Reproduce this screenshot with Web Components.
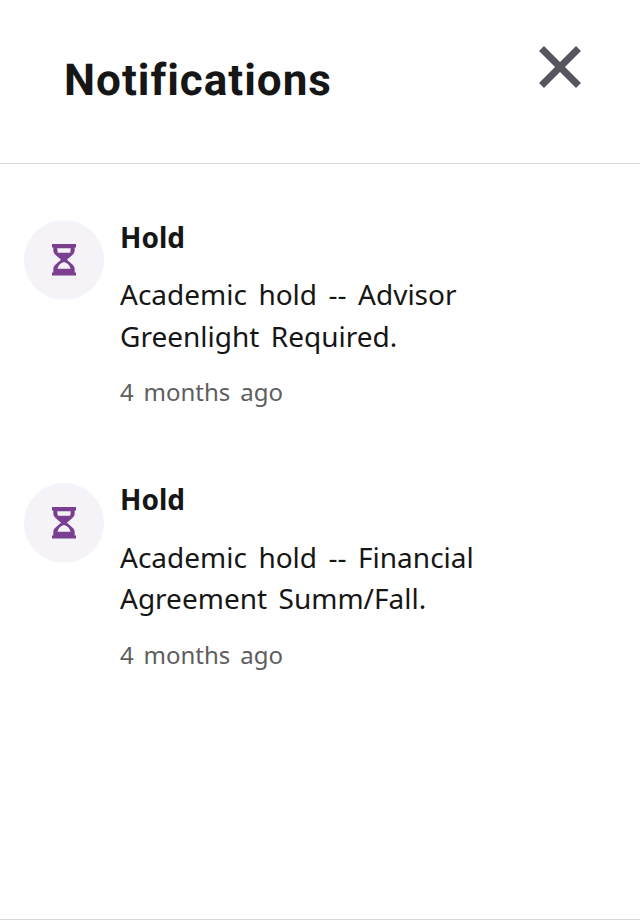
<!DOCTYPE html>
<html><head><meta charset="utf-8"><style>
html,body{margin:0;padding:0;background:#fff}
body{height:920px;overflow:hidden}
notif-panel{height:920px}
</style></head><body>
<notif-panel>
<notif-item title="Hold" time="4 months ago">Academic hold -- Advisor<br>Greenlight Required.</notif-item>
<notif-item title="Hold" time="4 months ago">Academic hold -- Financial<br>Agreement Summ/Fall.</notif-item>
</notif-panel>
<script>
class NotifPanel extends HTMLElement{constructor(){super();this.attachShadow({mode:'open'}).innerHTML=`<style>
:host{display:flex;flex-direction:column;box-sizing:border-box;border-bottom:1px solid #d9d9d9;background:#fff}
header{display:flex;justify-content:space-between;align-items:flex-start;box-sizing:border-box;border-bottom:1px solid #d9d9d9;padding:0 58px 0 64px;height:164px}
h1{margin:53px 0 0;font:700 44px/54px Roboto,sans-serif;letter-spacing:1px;text-rendering:geometricPrecision;color:#161616}
svg{margin-top:45px;display:block}
main{display:flex;flex-direction:column;gap:75.4px;padding:56px 24px 0}
</style><header><h1>Notifications</h1><svg width="44" height="44" viewBox="0 0 44 44"><path d="M3.500 3.500L40.500 40.500M40.500 3.500L3.500 40.500" stroke="#55565e" stroke-width="7" stroke-linecap="butt"/></svg></header><main><slot></slot></main>`}}
customElements.define('notif-panel',NotifPanel);
class NotifItem extends HTMLElement{constructor(){super();const s=this.attachShadow({mode:'open'});s.innerHTML=`<style>
:host{display:flex;gap:16px;font-family:"Noto Sans",sans-serif;color:#161616}
.c{width:80px;height:80px;border-radius:50%;background:#f5f3f8;display:flex;align-items:center;justify-content:center;flex:none}
.t{font-weight:700;font-size:28px;line-height:36px;margin-top:-1.3px}
.b{font-size:28px;line-height:41.6px;margin-top:19.4px;word-spacing:.15em}
.m{font-size:24px;line-height:30px;color:#5e5e5e;margin-top:19.9px;word-spacing:.15em}
</style><div class="c"><svg width="24" height="32" viewBox="0 0 24 32"><path fill="#7b3f92" fill-rule="evenodd" d="M0 0H24V3.500H22.700V6.500C22.700 10.500 17.500 13 15 15.700C17.500 18.500 22.700 21 22.700 25V28.500H24V31.500H0V28.500H1.300V25C1.300 21 6.500 18.500 9 15.700C6.500 13 1.300 10.500 1.300 6.500V3.500H0ZM5.200 4.300L5.800 8.800H18.200L18.800 4.300ZM12 18C8.500 19 6 21.500 5.500 24.700H18.500C18 21.500 15.500 19 12 18Z"/></svg></div><div><div class="t"></div><div class="b"><slot></slot></div><div class="m"></div></div>`;
s.querySelector('.t').textContent=this.getAttribute('title');s.querySelector('.m').textContent=this.getAttribute('time')}}
customElements.define('notif-item',NotifItem);
</script>
</body></html>
